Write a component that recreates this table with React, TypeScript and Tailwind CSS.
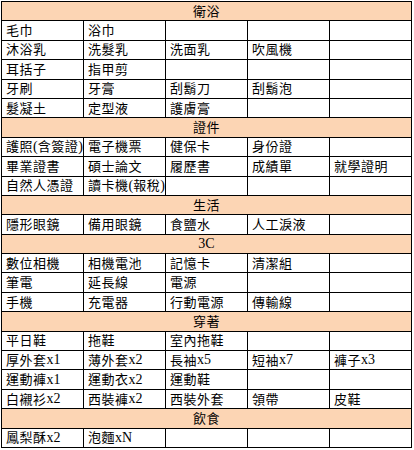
import React from 'react';

type Section = { title: string; rows: string[][] };

const sections: Section[] = [
  {
    title: '衛浴',
    rows: [
      ['毛巾', '浴巾', '', '', ''],
      ['沐浴乳', '洗髮乳', '洗面乳', '吹風機', ''],
      ['耳括子', '指甲剪', '', '', ''],
      ['牙刷', '牙膏', '刮鬍刀', '刮鬍泡', ''],
      ['髮凝土', '定型液', '護膚膏', '', ''],
    ],
  },
  {
    title: '證件',
    rows: [
      ['護照(含簽證)', '電子機票', '健保卡', '身份證', ''],
      ['畢業證書', '碩士論文', '履歷書', '成績單', '就學證明'],
      ['自然人憑證', '讀卡機(報稅)', '', '', ''],
    ],
  },
  {
    title: '生活',
    rows: [['隱形眼鏡', '備用眼鏡', '食鹽水', '人工淚液', '']],
  },
  {
    title: '3C',
    rows: [
      ['數位相機', '相機電池', '記憶卡', '清潔組', ''],
      ['筆電', '延長線', '電源', '', ''],
      ['手機', '充電器', '行動電源', '傳輸線', ''],
    ],
  },
  {
    title: '穿著',
    rows: [
      ['平日鞋', '拖鞋', '室內拖鞋', '', ''],
      ['厚外套x1', '薄外套x2', '長袖x5', '短袖x7', '褲子x3'],
      ['運動褲x1', '運動衣x2', '運動鞋', '', ''],
      ['白襯衫x2', '西裝褲x2', '西裝外套', '領帶', '皮鞋'],
    ],
  },
  {
    title: '飲食',
    rows: [['鳳梨酥x2', '泡麵xN', '', '', '']],
  },
];

// 英數字用較大的襯線字
const Txt = ({ text }: { text: string }) => (
  <>
    {text.split(/([A-Za-z0-9()]+)/).map((part, i) =>
      /^[A-Za-z0-9()]+$/.test(part) ? (
        <span key={i} className="text-[14px] tracking-normal">
          {part}
        </span>
      ) : (
        <span key={i}>{part}</span>
      )
    )}
  </>
);

export default function App() {
  return (
    <div
      className="w-[414px] h-[450px] bg-white pt-[1px] pl-[1px] text-black"
      style={{ fontFamily: '"Liberation Serif", "Noto Sans CJK TC", serif' }}
    >
      <div className="w-[411px] bg-black p-px grid grid-cols-5 auto-rows-[18.4px] gap-px text-[13px] tracking-[0.5px] leading-none">
        {sections.map((s) => (
          <React.Fragment key={s.title}>
            {/* 分類標題列 */}
            <div className="col-span-5 bg-[#fcd5b4] flex items-center justify-center">
              <Txt text={s.title} />
            </div>
            {s.rows.map((row, i) =>
              row.map((cell, j) => (
                <div
                  key={s.title + i + '-' + j}
                  className="bg-white flex items-center pl-[4px] whitespace-nowrap overflow-hidden"
                >
                  <Txt text={cell} />
                </div>
              ))
            )}
          </React.Fragment>
        ))}
      </div>
    </div>
  );
}
